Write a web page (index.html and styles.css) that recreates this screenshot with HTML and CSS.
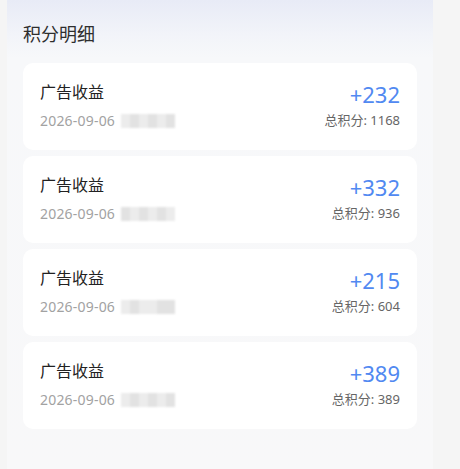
FILE: index.html
```html
<!DOCTYPE html>
<html lang="zh">
<head>
<meta charset="utf-8">
<link rel="stylesheet" href="styles.css">
</head>
<body>
<div class="panel">
  <h2 class="title">积分明细</h2>
  <div class="list">
    <div class="card">
      <div class="left">
        <div class="name">广告收益</div>
        <div class="date">2026-09-06<span class="mask"><i></i><i class="d"></i><i></i><i class="d"></i><i></i><i class="d"></i></span></div>
      </div>
      <div class="right">
        <div class="amount">+232</div>
        <div class="total">总积分: 1168</div>
      </div>
    </div>
    <div class="card">
      <div class="left">
        <div class="name">广告收益</div>
        <div class="date">2026-09-06<span class="mask"><i class="d"></i><i></i><i class="d"></i><i></i><i class="d"></i><i></i></span></div>
      </div>
      <div class="right">
        <div class="amount">+332</div>
        <div class="total">总积分: 936</div>
      </div>
    </div>
    <div class="card">
      <div class="left">
        <div class="name">广告收益</div>
        <div class="date">2026-09-06<span class="mask"><i></i><i class="d"></i><i></i><i></i><i class="d"></i><i class="d"></i></span></div>
      </div>
      <div class="right">
        <div class="amount">+215</div>
        <div class="total">总积分: 604</div>
      </div>
    </div>
    <div class="card">
      <div class="left">
        <div class="name">广告收益</div>
        <div class="date">2026-09-06<span class="mask"><i></i><i class="d"></i><i></i><i class="d"></i><i></i><i class="d"></i></span></div>
      </div>
      <div class="right">
        <div class="amount">+389</div>
        <div class="total">总积分: 389</div>
      </div>
    </div>
  </div>
</div>
</body>
</html>
```
FILE: styles.css
```css
html, body {
  margin: 0;
  padding: 0;
  background: #f5f5f5;
  font-family: "Noto Sans", "Noto Sans CJK SC", sans-serif;
}
.panel {
  margin-left: 7px;
  width: 426px;
  min-height: 469px;
  box-sizing: border-box;
  padding: 21px 16px 0;
  background: linear-gradient(to bottom, #e8ebf6 0px, #f2f4f9 35px, #f7f8fa 58px, #f8f8f9 100%);
}
.title {
  margin: 0 0 16px;
  font-size: 18px;
  line-height: 26px;
  font-weight: 400;
  color: #2e2e2e;
}
.list {
  display: flex;
  flex-direction: column;
  gap: 6px;
}
.card {
  height: 87px;
  box-sizing: border-box;
  background: #fff;
  border-radius: 10px;
  padding: 17px 17px 0;
  display: flex;
  justify-content: space-between;
}
.left, .right {
  display: flex;
  flex-direction: column;
}
.right {
  align-items: flex-end;
}
.name {
  font-size: 16px;
  line-height: 22px;
  color: #222;
  margin-top: 1px;
}
.date {
  margin-top: 9px;
  font-size: 14px;
  line-height: 18px;
  color: #a2a2a2;
  display: flex;
  align-items: center;
  letter-spacing: 0.2px;
}
.mask {
  display: inline-flex;
  margin-left: 6px;
  height: 14px;
  filter: blur(1.2px);
}
.mask i {
  display: block;
  width: 9px;
  height: 14px;
  background: #ececec;
}
.mask i.d {
  background: #e2e2e2;
}
.amount {
  font-size: 22px;
  line-height: 28px;
  color: #5189f1;
}
.total {
  margin-top: 3px;
  font-size: 13px;
  line-height: 18px;
  color: #666;
}
```
